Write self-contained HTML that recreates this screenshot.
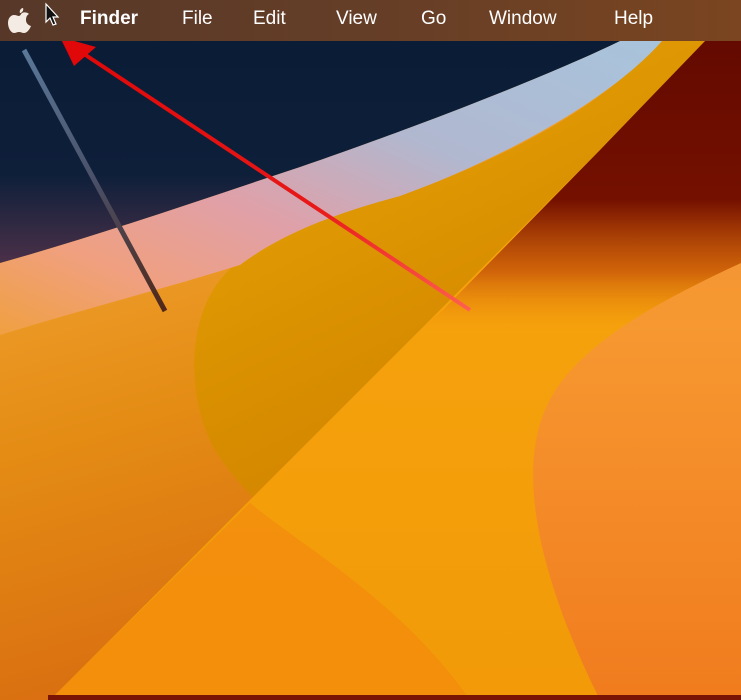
<!DOCTYPE html>
<html><head><style>
html,body{margin:0;padding:0;width:741px;height:700px;overflow:hidden;background:#f29310}
.bar{position:absolute;left:0;top:0;width:741px;height:41px;background:linear-gradient(90deg,#573828,#653e27 50%,#7a4520);}
.bar span{position:absolute;top:8px;font:19px "Liberation Sans",sans-serif;color:#fff;}
svg{position:absolute;left:0;top:0}
</style></head><body>
<svg width="741" height="700" viewBox="0 0 741 700">
<defs>
<linearGradient id="base" x1="0" y1="0" x2="0.3" y2="1">
<stop offset="0.3" stop-color="#f0a030"/><stop offset="0.6" stop-color="#e48c14"/><stop offset="1" stop-color="#d86a10"/></linearGradient>
<linearGradient id="navy" x1="0" y1="0" x2="0" y2="1">
<stop offset="0" stop-color="#0a1c36"/><stop offset="0.6" stop-color="#0e1f3a"/><stop offset="1" stop-color="#4a3048"/></linearGradient>
<linearGradient id="band" x1="1" y1="0" x2="0" y2="1">
<stop offset="0" stop-color="#a8c4dc"/><stop offset="0.35" stop-color="#b0b8d0"/><stop offset="0.6" stop-color="#e0a0a8"/><stop offset="0.8" stop-color="#f0a080"/><stop offset="1" stop-color="#f0a040"/></linearGradient>
<linearGradient id="gold" x1="0" y1="0" x2="0.4" y2="1">
<stop offset="0" stop-color="#eaa808"/><stop offset="0.5" stop-color="#d88e00"/><stop offset="1" stop-color="#cc7800"/></linearGradient>
<linearGradient id="bright" x1="0" y1="0" x2="0" y2="1">
<stop offset="0" stop-color="#f8a810"/><stop offset="1" stop-color="#f29a08"/></linearGradient>
<linearGradient id="maroon" x1="0" y1="0" x2="0" y2="1">
<stop offset="0" stop-color="#640a00"/><stop offset="0.55" stop-color="#741000"/><stop offset="0.8" stop-color="#c04a08" stop-opacity="0.7"/><stop offset="1" stop-color="#f08a10" stop-opacity="0"/></linearGradient>
<linearGradient id="light" x1="0" y1="0" x2="0" y2="1">
<stop offset="0" stop-color="#f89c38"/><stop offset="1" stop-color="#f07820"/></linearGradient>
<linearGradient id="arrow" x1="0" y1="0" x2="1" y2="1">
<stop offset="0" stop-color="#e00808"/><stop offset="0.6" stop-color="#e81818"/><stop offset="1" stop-color="#ff6050"/></linearGradient>
<linearGradient id="shadow" x1="0" y1="0" x2="0" y2="1">
<stop offset="0" stop-color="#5a7898"/><stop offset="0.5" stop-color="#4a5068"/><stop offset="1" stop-color="#502818"/></linearGradient>
</defs>
<rect width="741" height="700" fill="url(#base)"/>
<path d="M660,41 L741,41 L741,700 L500,700 C430,630 270,540 215,450 C185,395 188,320 220,280 C260,230 340,212 400,196 C500,160 600,110 660,41Z" fill="url(#gold)"/>
<path d="M705,41 L741,41 L741,700 L40,700 L50,700 L750,0 Z" fill="url(#bright)"/>
<path d="M250,503 C300,545 400,600 470,700 L50,700 Z" fill="#f28c0c" opacity="0.8"/>
<path d="M705,41 L741,41 L741,330 L420,330 L443,310 L600,150 Z" fill="url(#maroon)"/>
<path d="M741,263 C650,305 570,350 545,410 C515,480 545,590 600,700 L741,700Z" fill="url(#light)" opacity="0.9"/>
<path d="M620,41 L662,41 C610,100 500,160 400,196 C330,215 280,235 240,265 C160,290 80,310 0,335 L0,263 C100,235 200,200 300,167 C450,115 560,70 620,41Z" fill="url(#band)"/>
<path d="M0,41 L620,41 C560,70 450,115 300,167 C200,200 100,235 0,263 Z" fill="url(#navy)"/>
<line x1="165" y1="311" x2="24" y2="50" stroke="url(#shadow)" stroke-width="5"/>
<line x1="470" y1="310" x2="78" y2="50" stroke="url(#arrow)" stroke-width="4"/>
<polygon points="60,37 96,47 74,66" fill="#e00808"/>
<rect x="48" y="695" width="693" height="5" fill="#7a1404"/>
</svg>
<div class="bar">
<svg width="741" height="41" style="position:absolute;left:0;top:0">
<path d="M22,13 C24,12 27,12 29,14 C27,15 26,17 26,20 C26,23 28,25 31,26 C30,29 27,33 24,33 C22,33 21,32 19,32 C17,32 16,33 14,33 C11,33 8,28 8,23 C8,18 11,15 14,15 C16,15 18,16 19,16 C20,16 21,14 22,13Z M23,8 C24,10 22,13 20,13 C19,11 21,8 23,8Z" fill="#f4ece4"/>
<path d="M46,4 L46,22 L50,18 L53,25 L56,24 L53,17 L58,17 Z" fill="#111" stroke="#fff" stroke-width="1.2"/>
</svg>
<span style="left:80px;font-weight:bold">Finder</span>
<span style="left:182px">File</span>
<span style="left:253px">Edit</span>
<span style="left:336px">View</span>
<span style="left:421px">Go</span>
<span style="left:489px">Window</span>
<span style="left:614px">Help</span>
</div>
</body></html>
